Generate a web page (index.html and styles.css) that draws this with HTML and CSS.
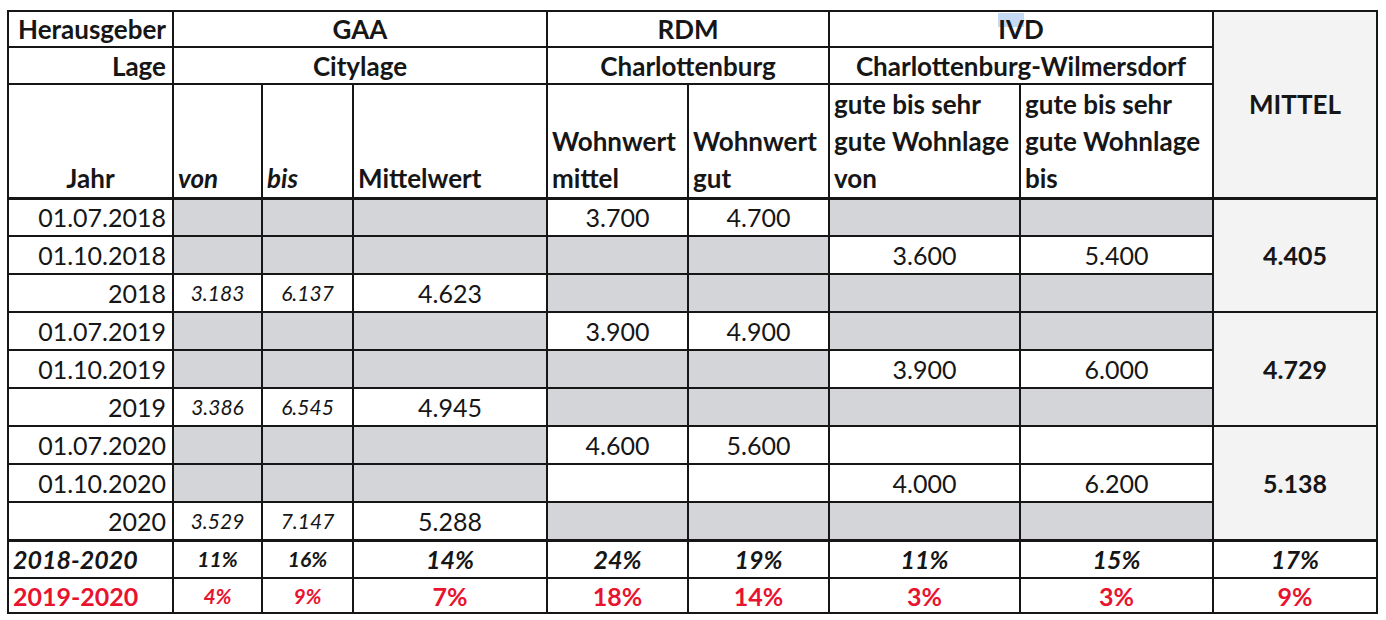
FILE: index.html
```html
<!DOCTYPE html>
<html lang="de">
<head>
<meta charset="utf-8">
<title>Mietspiegel Vergleich</title>
<link rel="stylesheet" href="styles.css">
</head>
<body>
<table class="sheet">
  <colgroup>
    <col class="c-jahr">
    <col class="c-von">
    <col class="c-bis">
    <col class="c-mw">
    <col class="c-wm">
    <col class="c-wg">
    <col class="c-iv">
    <col class="c-ib">
    <col class="c-avg">
  </colgroup>
  <tr class="r-h1">
    <td class="hd right">Herausgeber</td>
    <td class="hd" colspan="3">GAA</td>
    <td class="hd" colspan="2">RDM</td>
    <td class="hd" colspan="2"><span class="hl">IV</span>D</td>
    <td class="hd avg" rowspan="3">MITTEL</td>
  </tr>
  <tr class="r-h2">
    <td class="hd right">Lage</td>
    <td class="hd" colspan="3">Citylage</td>
    <td class="hd" colspan="2">Charlottenburg</td>
    <td class="hd" colspan="2">Charlottenburg-Wilmersdorf</td>
  </tr>
  <tr class="r-h3">
    <td class="hd bottom">Jahr</td>
    <td class="hd bottom left it">von</td>
    <td class="hd bottom left it">bis</td>
    <td class="hd bottom left">Mittelwert</td>
    <td class="hd bottom left">Wohnwert<br>mittel</td>
    <td class="hd bottom left">Wohnwert<br>gut</td>
    <td class="hd bottom left">gute bis sehr<br>gute Wohnlage<br>von</td>
    <td class="hd bottom left">gute bis sehr<br>gute Wohnlage<br>bis</td>
  </tr>

  <tr class="r-d first">
    <td class="right">01.07.2018</td>
    <td class="g"></td><td class="g"></td><td class="g"></td>
    <td>3.700</td><td>4.700</td>
    <td class="g"></td><td class="g"></td>
    <td class="avg b" rowspan="3">4.405</td>
  </tr>
  <tr class="r-d">
    <td class="right">01.10.2018</td>
    <td class="g"></td><td class="g"></td><td class="g"></td>
    <td class="g"></td><td class="g"></td>
    <td>3.600</td><td>5.400</td>
  </tr>
  <tr class="r-d">
    <td class="right">2018</td>
    <td class="sm">3.183</td><td class="sm">6.137</td><td>4.623</td>
    <td class="g"></td><td class="g"></td><td class="g"></td><td class="g"></td>
  </tr>

  <tr class="r-d">
    <td class="right">01.07.2019</td>
    <td class="g"></td><td class="g"></td><td class="g"></td>
    <td>3.900</td><td>4.900</td>
    <td class="g"></td><td class="g"></td>
    <td class="avg b" rowspan="3">4.729</td>
  </tr>
  <tr class="r-d">
    <td class="right">01.10.2019</td>
    <td class="g"></td><td class="g"></td><td class="g"></td>
    <td class="g"></td><td class="g"></td>
    <td>3.900</td><td>6.000</td>
  </tr>
  <tr class="r-d">
    <td class="right">2019</td>
    <td class="sm">3.386</td><td class="sm">6.545</td><td>4.945</td>
    <td class="g"></td><td class="g"></td><td class="g"></td><td class="g"></td>
  </tr>

  <tr class="r-d">
    <td class="right">01.07.2020</td>
    <td class="g"></td><td class="g"></td><td class="g"></td>
    <td>4.600</td><td>5.600</td>
    <td></td><td></td>
    <td class="avg b" rowspan="3">5.138</td>
  </tr>
  <tr class="r-d">
    <td class="right">01.10.2020</td>
    <td class="g"></td><td class="g"></td><td class="g"></td>
    <td></td><td></td>
    <td>4.000</td><td>6.200</td>
  </tr>
  <tr class="r-d">
    <td class="right">2020</td>
    <td class="sm">3.529</td><td class="sm">7.147</td><td>5.288</td>
    <td class="g"></td><td class="g"></td><td class="g"></td><td class="g"></td>
  </tr>

  <tr class="r-d sum">
    <td class="left bi">2018-2020</td>
    <td class="smb">11%</td><td class="smb">16%</td>
    <td class="bi">14%</td><td class="bi">24%</td><td class="bi">19%</td>
    <td class="bi">11%</td><td class="bi">15%</td><td class="bi">17%</td>
  </tr>
  <tr class="r-last red">
    <td class="left b">2019-2020</td>
    <td class="smb">4%</td><td class="smb">9%</td>
    <td class="b">7%</td><td class="b">18%</td><td class="b">14%</td>
    <td class="b">3%</td><td class="b">3%</td><td class="b">9%</td>
  </tr>
</table>
</body>
</html>
```

FILE: styles.css
```css
* {
  box-sizing: border-box;
}

body {
  margin: 0;
  background: #ffffff;
  font-family: Lato, "Open Sans", sans-serif;
  color: #161616;
}

.sheet {
  border-collapse: collapse;
  table-layout: fixed;
  width: 1369px;
  margin: 10px 0 0 7px;
  font-size: 25px;
}

.c-jahr { width: 165px; }
.c-von  { width: 89px; }
.c-bis  { width: 91px; }
.c-mw   { width: 194px; }
.c-wm   { width: 141px; }
.c-wg   { width: 141px; }
.c-iv   { width: 191px; }
.c-ib   { width: 193px; }
.c-avg  { width: 164px; }

.sheet td {
  border: 2px solid #161616;
  padding: 0 6px;
  white-space: nowrap;
  overflow: hidden;
  text-align: center;
  vertical-align: middle;
  line-height: 30px;
}

.r-h1 { height: 36px; }
.r-h2 { height: 37px; }
.r-h3 { height: 114px; }
.r-d { height: 38px; }
.r-last { height: 35px; }

.first td,
.sum td {
  border-top-width: 3px;
}

.hd {
  font-weight: 700;
  font-size: 26px;
}

.right { text-align: right !important; }
.left { text-align: left !important; padding-left: 4px !important; }

.bottom {
  vertical-align: bottom !important;
  line-height: 37px !important;
}

.it { font-style: italic; }
.b { font-weight: 700; }
.bi { font-weight: 700; font-style: italic; }

.sm {
  font-size: 21px;
  font-style: italic;
}

.smb {
  font-size: 21px;
  font-style: italic;
  font-weight: 700;
}

.g {
  background: #d4d5d8;
}

.avg {
  background: #f3f3f3;
}

.red td {
  color: #e8132f;
}

.hl {
  background: linear-gradient(to bottom, #c6daf4 0%, #c6daf4 45%, transparent 45%);
}
```
